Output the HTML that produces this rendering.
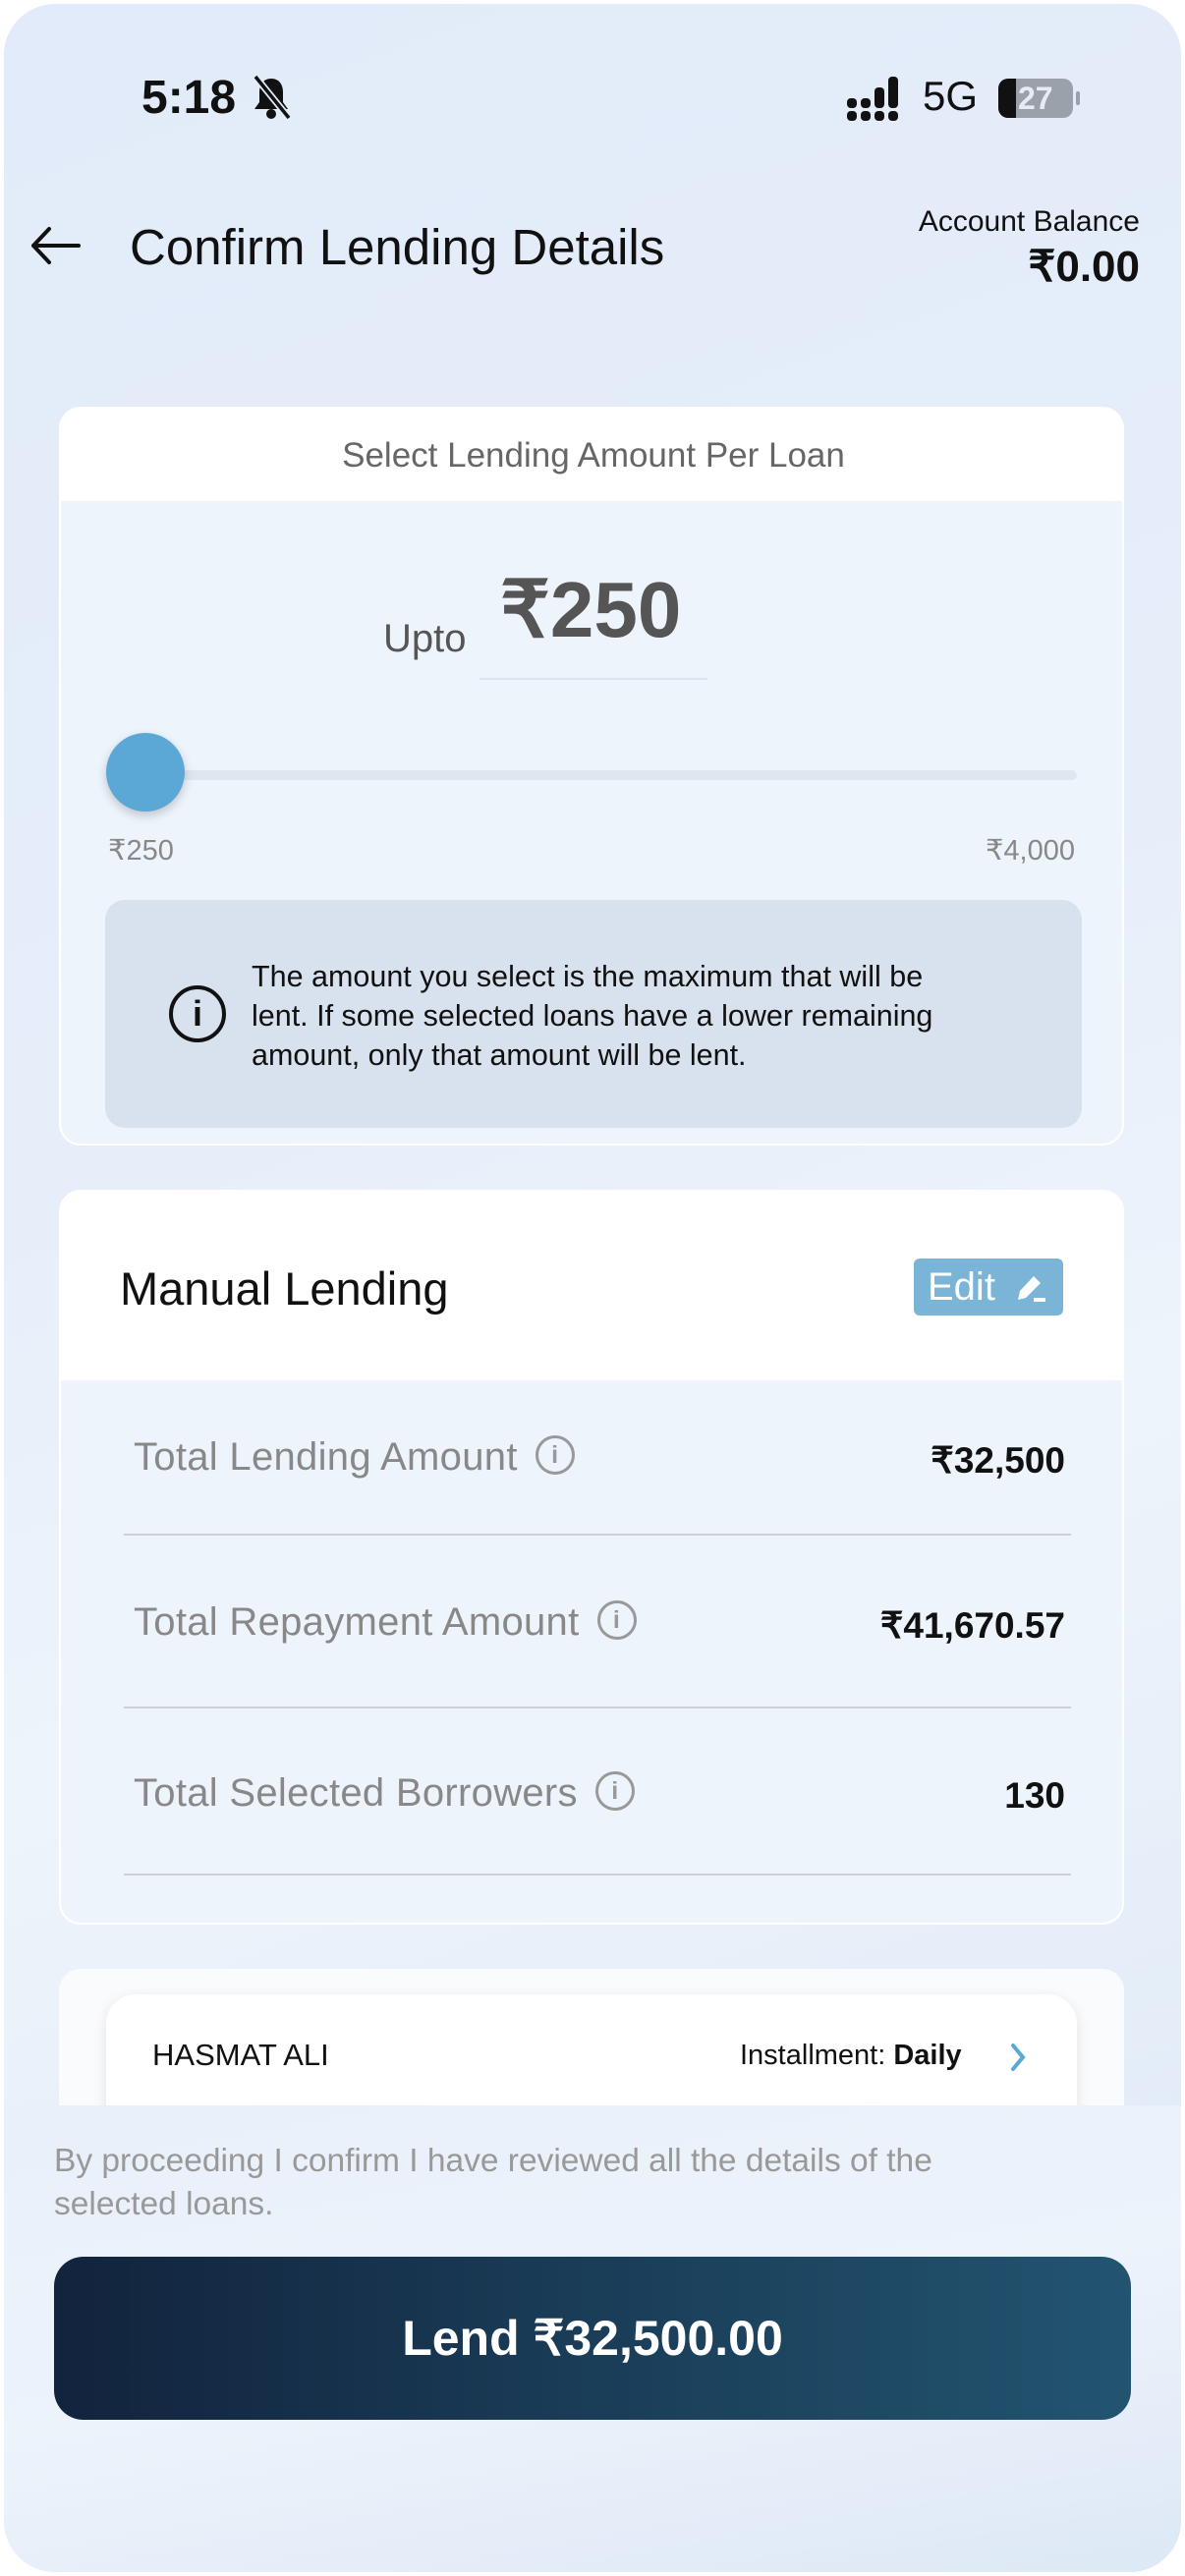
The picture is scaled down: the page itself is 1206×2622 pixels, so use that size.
<!DOCTYPE html>
<html><head><meta charset="utf-8"><style>
*{margin:0;padding:0;box-sizing:border-box}
html,body{width:1206px;height:2622px;overflow:hidden;background:#fff}
body{font-family:"Liberation Sans","Noto Sans CJK SC",sans-serif;position:relative}
.frame{position:absolute;left:4px;top:4px;width:1198px;height:2614px;border-radius:52px;background:linear-gradient(160deg,#e2ebf9 0%,#e6eefa 40%,#eef4fb 60%,#dbe7f6 100%);overflow:hidden}
.a{position:absolute;white-space:nowrap}
.card{position:absolute;left:56px;width:1084px;border-radius:22px;background:#eef4fc;border:2px solid #fff;overflow:hidden}
.row{position:absolute;left:74px;font-size:40px;color:#888;letter-spacing:0.3px}
.val{position:absolute;right:58px;font-size:37px;color:#111;font-weight:600}
.div{position:absolute;left:64px;width:964px;height:2px;background:#cdd0d4}
.ic{display:inline-block;width:40px;height:40px;border:3px solid #999;border-radius:50%;vertical-align:middle;margin-left:18px;position:relative;top:-4px;color:#999;font-size:25px;text-align:center;line-height:34px;font-weight:bold}
</style></head><body>
<div class="frame">
<div class="a" style="left:140px;top:68px;font-size:48px;font-weight:bold;color:#111">5:18</div>
<svg class="a" style="left:252px;top:72px" width="40" height="48" viewBox="0 0 40 48"><path d="M20 4c-8 0-12 6-12 14v10l-5 7h34l-5-7V18c0-8-4-14-12-14z" fill="#111"/><circle cx="20" cy="40" r="5" fill="#111"/><path d="M4 2l34 42" stroke="#e4ecf9" stroke-width="7"/><path d="M4 2l34 42" stroke="#111" stroke-width="3.5"/></svg>
<svg class="a" style="left:858px;top:74px" width="62" height="46" viewBox="0 0 62 46"><g fill="#111"><rect x="0" y="22" width="10" height="10" rx="4"/><rect x="0" y="35" width="10" height="10" rx="4"/><rect x="14" y="22" width="10" height="10" rx="4"/><rect x="14" y="35" width="10" height="10" rx="4"/><rect x="28" y="11" width="10" height="21" rx="4"/><rect x="28" y="35" width="10" height="10" rx="4"/><rect x="42" y="0" width="10" height="32" rx="4"/><rect x="42" y="35" width="10" height="10" rx="4"/></g></svg>
<div class="a" style="left:935px;top:70px;font-size:42px;color:#111">5G</div>
<div class="a" style="left:1012px;top:76px;width:76px;height:40px;border-radius:10px;background:#9aa1aa;overflow:hidden"><div style="width:18px;height:40px;background:#111"></div><div class="a" style="left:20px;top:2px;font-size:32px;font-weight:bold;color:#e8ecf2">27</div></div>
<div class="a" style="left:1091px;top:89px;width:4px;height:14px;border-radius:2px;background:#9aa1aa"></div>
<svg class="a" style="left:26px;top:226px" width="56" height="40" viewBox="0 0 56 40"><path d="M50 20H4M20 3L4 20l16 17" fill="none" stroke="#111" stroke-width="4" stroke-linecap="round" stroke-linejoin="round"/></svg>
<div class="a" style="left:128px;top:218px;font-size:51px;color:#111">Confirm Lending Details</div>
<div class="a" style="right:42px;top:205px;font-size:30px;color:#111">Account Balance</div>
<div class="a" style="right:42px;top:242px;font-size:44px;color:#111;font-weight:bold">₹0.00</div>

<div class="card" style="top:410px;height:752px">
<div class="a" style="left:0;top:0;width:1084px;height:94px;background:#fff"></div>
<div class="a" style="left:0;width:1084px;top:28px;text-align:center;font-size:35px;color:#666">Select Lending Amount Per Loan</div>
<div class="a" style="left:328px;top:212px;font-size:40px;color:#555">Upto</div>
<div class="a" style="left:447px;top:158px;font-size:80px;color:#555;font-weight:bold">₹250</div>
<div class="a" style="left:426px;top:274px;width:232px;height:2px;background:#dde4ee"></div>
<div class="a" style="left:48px;top:368px;width:986px;height:10px;border-radius:5px;background:#dfe6f0"></div>
<div class="a" style="left:46px;top:330px;width:80px;height:80px;border-radius:50%;background:#5ba8d6;box-shadow:0 4px 10px rgba(0,0,0,.2)"></div>
<div class="a" style="left:48px;top:432px;font-size:29px;color:#888">₹250</div>
<div class="a" style="right:48px;top:432px;font-size:29px;color:#888">₹4,000</div>
<div class="a" style="left:45px;top:500px;width:994px;height:232px;border-radius:20px;background:#d8e2ee"></div>
<div class="a" style="left:110px;top:587px;width:58px;height:58px;border:4px solid #111;border-radius:50%;text-align:center;font-size:36px;line-height:50px;font-weight:bold;color:#111">i</div>
<div class="a" style="left:194px;top:558px;font-size:30.5px;color:#111;line-height:40px">The amount you select is the maximum that will be<br>lent. If some selected loans have a lower remaining<br>amount, only that amount will be lent.</div>
</div>

<div class="card" style="top:1207px;height:748px">
<div class="a" style="left:0;top:0;width:1084px;height:192px;background:#fff"></div>
<div class="a" style="left:60px;top:71px;font-size:47px;color:#111">Manual Lending</div>
<div class="a" style="left:868px;top:68px;width:152px;height:58px;border-radius:6px;background:#7ab4d6;color:#fff;font-size:40px;padding-left:14px;line-height:58px">Edit</div>
<svg class="a" style="left:968px;top:80px" width="40" height="36" viewBox="0 0 40 36"><path d="M6 30l2-9L22 6l7 7-15 15z" fill="#fff"/><rect x="22" y="28" width="12" height="4" fill="#fff"/></svg>
<div class="row" style="top:248px">Total Lending Amount<span class="ic">i</span></div><div class="val" style="top:252px">₹32,500</div>
<div class="div" style="top:348px"></div>
<div class="row" style="top:416px">Total Repayment Amount<span class="ic">i</span></div><div class="val" style="top:420px">₹41,670.57</div>
<div class="div" style="top:524px"></div>
<div class="row" style="top:590px">Total Selected Borrowers<span class="ic">i</span></div><div class="val" style="top:594px">130</div>
<div class="div" style="top:694px"></div>
</div>

<div class="a" style="left:56px;top:2000px;width:1084px;height:200px;border-radius:22px;background:#fafbfd"></div>
<div class="a" style="left:104px;top:2026px;width:988px;height:200px;border-radius:30px;background:#fff;box-shadow:0 4px 14px rgba(0,0,0,.1)"></div>
<div class="a" style="left:151px;top:2070px;font-size:31px;color:#111">HASMAT ALI</div>
<div class="a" style="left:749px;top:2072px;font-size:29px;color:#111">Installment: <b>Daily</b></div>
<svg class="a" style="left:1022px;top:2074px" width="20" height="32" viewBox="0 0 20 32"><path d="M5 4l10 12-10 12" fill="none" stroke="#5ba8d6" stroke-width="4" stroke-linecap="round"/></svg>

<div class="a" style="left:0;top:2139px;width:1198px;height:480px;background:linear-gradient(170deg,#e8f0fa,#edf3fb 50%,#dde8f6)"></div>
<div class="a" style="left:51px;top:2174px;font-size:33.5px;color:#999;line-height:44px">By proceeding I confirm I have reviewed all the details of the<br>selected loans.</div>
<div class="a" style="left:51px;top:2293px;width:1096px;height:166px;border-radius:30px;background:linear-gradient(90deg,#12233d,#1a3d58 50%,#225470);color:#fff;font-size:50px;font-weight:bold;text-align:center;line-height:166px">Lend ₹32,500.00</div>
</div>
</body></html>
